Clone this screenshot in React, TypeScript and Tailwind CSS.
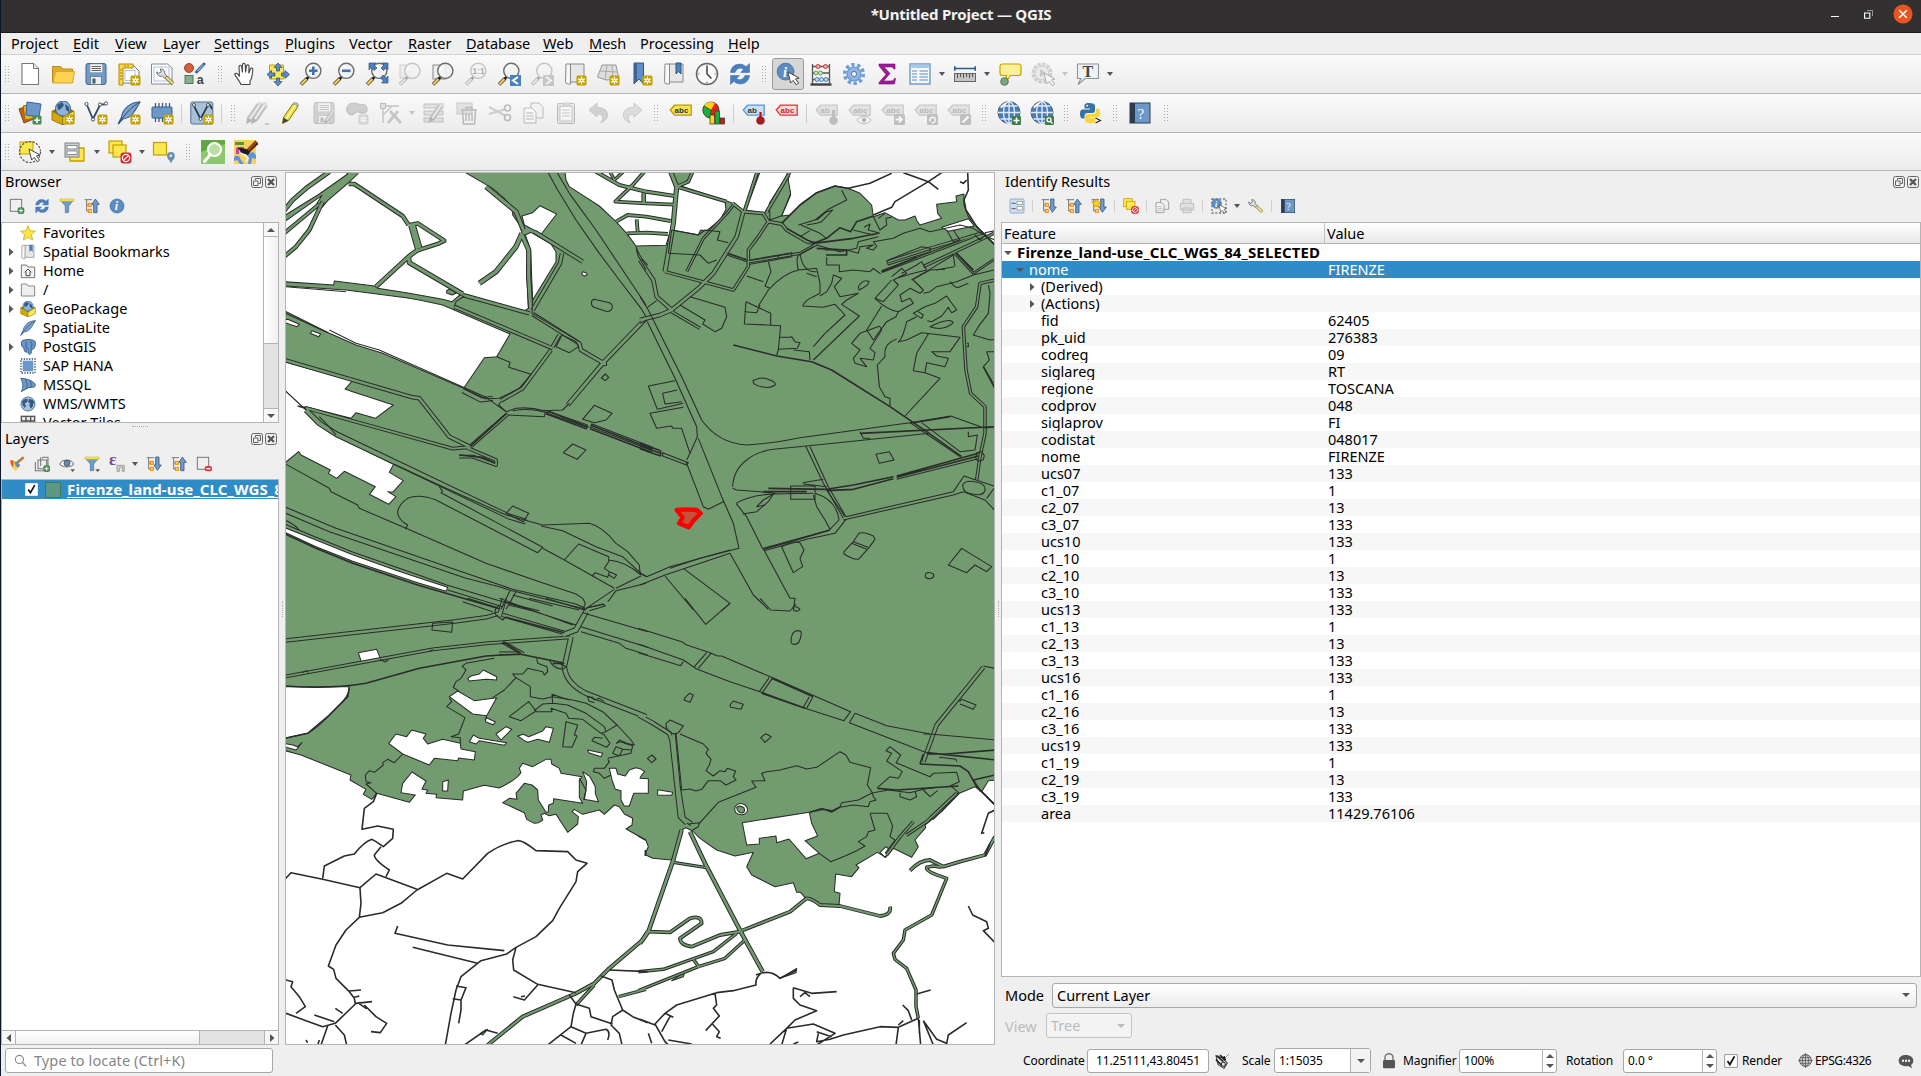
import React from "react";

type Kids = { children?: React.ReactNode };

/* ---------- icon helpers ---------- */

const Svg = ({ children, s = "h-6 w-6", o = "" }: Kids & { s?: string; o?: string }) => (
  <svg viewBox="0 0 24 24" className={`${s} ${o} shrink-0`} fill="none">
    {children}
  </svg>
);
const Star = () => (
  <g>
    <rect x="13.5" y="13.5" width="10" height="10" rx="1.5" fill="#c4a000" />
    <path d="M18.5 14.8v7.4M15.3 16.6l6.4 3.8M21.7 16.6l-6.4 3.8" stroke="#fff" strokeWidth="1.3" />
    <circle cx="18.5" cy="18.5" r="1.8" fill="#fff" />
    <circle cx="18.5" cy="18.5" r="0.8" fill="#c4a000" />
  </g>
);
const Lens = ({ fill = "#f2f2f2" }: { fill?: string }) => (
  <g>
    <path d="M2 22.5l6-6" stroke="#3a3a3a" strokeWidth="3.6" />
    <path d="M2.3 22.2l5.4-5.4" stroke="#fcd34a" strokeWidth="2" />
    <path d="M7.5 17l2.2-2.2" stroke="#1d1d1d" strokeWidth="2.6" />
    <circle cx="14.3" cy="8.8" r="7.6" fill={fill} fillOpacity="0.9" stroke="#6b6e6b" strokeWidth="1.4" />
    <path d="M9.5 8a5 5 0 0 1 4-4.2" stroke="#fff" strokeWidth="1.6" />
  </g>
);
const Cursor = ({ x = 11, y = 11 }: { x?: number; y?: number }) => (
  <path transform={`translate(${x} ${y})`} d="M0 0l2.6 11 2.5-2.6 3.2 4.4 2.3-1.6-3.1-4.3 3.6-.9z" fill="#fff" stroke="#444" strokeWidth="1" />
);
const Tag = ({ fill, stroke, color, t = "abc" }: { fill: string; stroke: string; color: string; t?: string }) => (
  <g>
    <path d="M1.2 9l4.400-4.800h16.600v10H5.600z" fill={fill} stroke={stroke} strokeWidth="1.3" />
    <text x="5.6" y="12" fontSize="8" fontWeight="700" fill={color} fontFamily="Liberation Sans, sans-serif">{t}</text>
  </g>
);
const Globe = () => (
  <g>
    <circle cx="12" cy="11.500" r="11" fill="#4a7cb8" stroke="#5a6472" />
    <path d="M1 11.500h22M3.500 5h17M3.500 18h17M12 .5v22" stroke="#dfe9f5" strokeWidth="1.400" />
    <ellipse cx="12" cy="11.500" rx="5.500" ry="11" stroke="#dfe9f5" strokeWidth="1.400" />
    <path d="M4 7a10 10 0 0 1 5-5" stroke="#fff" strokeWidth="1.500" />
  </g>
);
const Earth = () => (
  <g>
    <circle cx="12" cy="12" r="10.500" fill="#a9c3df" stroke="#4f6f93" strokeWidth="1.400" />
    <path d="M3 8l5-4 4 1-1 4-4 2 2 4-2 3-3-4zM14 4l5 2 3 4-2 1-1 5-3 3-2-5 1-3-3-2z" fill="#34587f" />
  </g>
);
const Refresh = () => (
  <g fill="#4a80bd" stroke="#3a6a9f" strokeWidth=".5">
    <path d="M2.500 10.500C3 4.500 8 1.500 13 2.200c2.200.3 3.800 1.200 5 2.500L21.500 1.500v9H12.500l3-3C12.500 5 8.500 6.500 7 10.500z" />
    <path d="M21.500 13.500C21 19.500 16 22.500 11 21.800c-2.200-.3-3.800-1.200-5-2.500L2.500 22.500v-9H11.500l-3 3c3 2.500 7 1 8.500-3z" />
  </g>
);
const Info = () => (
  <g>
    <circle cx="12" cy="12" r="10.500" fill="#5b8cc4" stroke="#3e6a9c" />
    <text x="8.600" y="18.300" fontSize="18" fontStyle="italic" fontWeight="700" fill="#fff" fontFamily="Liberation Serif, serif">i</text>
  </g>
);
const Tree = ({ dir }: { dir: "up" | "down" }) => (
  <g>
    <path d="M1 2.500h11M4 2.500v17h4M4 10.500h4" stroke="#777" strokeWidth="1.500" />
    <rect x="6.500" y="8" width="4.500" height="4.500" fill="#fbd08a" stroke="#f08300" strokeWidth="1.400" />
    <rect x="6.500" y="17" width="4.500" height="4.500" fill="#fbd08a" stroke="#f08300" strokeWidth="1.400" />
    <path d={dir === "down" ? "M14.500 1.500h5v12h3.500l-6 8-5-8h2.500z" : "M14.500 22h5V9.500h3.500l-6-8-5 8h2.500z"} fill="#6f9bce" stroke="#33557c" strokeWidth="1.200" />
  </g>
);
const Yellow2 = () => (
  <g fill="#fbe74f" stroke="#c4a000" strokeWidth="1.200">
    <rect x="1" y="1" width="13" height="12" />
    <rect x="5" y="5" width="13" height="12" />
  </g>
);
const NoEntry = () => (
  <g>
    <rect x="12.500" y="12.500" width="11" height="11" rx="3" fill="#d9262e" />
    <circle cx="18" cy="18" r="3.600" stroke="#fff" strokeWidth="1.300" />
    <path d="M15.600 20.400l4.800-4.800" stroke="#fff" strokeWidth="1.300" />
  </g>
);
const Wrench = () => (
  <g>
    <path d="M12 12l9.500 9" stroke="#7d6b1e" strokeWidth="4.600" />
    <path d="M12 12l9.500 9" stroke="#e8dc8a" strokeWidth="2.800" />
    <path d="M5.500 2.500l1 3.500-3 2-2.500-2c0 4 3 6.500 7 5.500l3 2.500 2.500-2.500-2.500-3c.5-3.500-2-6.500-5.500-6z" fill="#ddd" stroke="#666" strokeWidth="1.200" />
  </g>
);
const Feather = () => (
  <g>
    <path d="M23 1C14 1 6 7 4.500 16L1 23l5-5c8-1 11-6 17-17z" fill="#7ba3d0" stroke="#3b5c82" strokeWidth="1.100" />
    <path d="M23 1C16 5 9 11 1.500 23" stroke="#2f4a6b" strokeWidth="1" />
  </g>
);
const Book = () => (
  <g>
    <rect x="2" y="2" width="20" height="20" fill="#6b97c9" stroke="#2c3e50" />
    <rect x="2" y="2" width="5" height="20" fill="#2c3b4d" />
    <text x="9.500" y="17.500" fontSize="15" fill="#fff" fontFamily="Liberation Serif, serif">?</text>
  </g>
);
const Cube = () => (
  <g>
    <path d="M1 10l11 6v8L1 19z" fill="#d3a800" stroke="#8a6d00" strokeWidth=".8" />
    <path d="M23 10l-11 6v8l11-5z" fill="#fbe74f" stroke="#8a6d00" strokeWidth=".8" />
    <path d="M1 10l5-3h12l5 3-11 6z" fill="#8f7300" />
    <circle cx="12" cy="7.500" r="7.500" fill="#8fb2d9" stroke="#3b6392" />
    <path d="M6 4l5-3 2 3-3 4-3 1zM14 3l4 3 0 5-3-2z" fill="#34587f" />
  </g>
);
const Disk = () => (
  <g>
    <rect x="2" y="1.500" width="20" height="21" rx="2" fill="#6c9bd0" stroke="#44658c" />
    <path d="M6 2h12.500v8.500H6z" fill="#f5f5f5" stroke="#999" strokeWidth=".6" />
    <path d="M7.500 4.500h9.500M7.500 6.500h9.500M7.500 8.500h9.500" stroke="#555" strokeWidth=".9" />
    <path d="M6.500 14.500h11v8h-11z" fill="#eee" stroke="#555" strokeWidth=".6" />
    <path d="M8.500 16.500h3v5h-3z" fill="#3b5c82" />
  </g>
);
const Pencil = ({ fill = "#f0dc3c" }: { fill?: string }) => (
  <g>
    <path d="M3.500 22.500l1-6L14 2.500l5 3-9.500 14z" fill={fill} stroke="#8c7a00" strokeWidth="1" />
    <path d="M3.500 22.500l1-6 5 3z" fill="#444" />
    <path d="M14 2.500c2-2.500 7 0 5 3z" fill="#bbb" stroke="#888" strokeWidth=".6" />
    <path d="M7 18l9.500-14" stroke="#fff8b0" strokeWidth="1.500" />
  </g>
);
const Sheet = () => <path d="M4 1.500h11.500l5 5v16H4z" fill="#fff" stroke="#777" strokeWidth="1.100" />;
const Funnel = () => (
  <g>
    <path d="M2 3h20l-7.500 9v9.500l-5 1V12z" fill="#6e99cb" stroke="#4a6f9c" />
    <path d="M1.500 1.500h21v3.500h-21z" fill="#fbe74f" stroke="#b89a00" strokeWidth=".6" />
  </g>
);
const Roll = () => (
  <g>
    <path d="M7 2h14v18H7z" fill="#e7e7e7" stroke="#888" />
    <path d="M3 2h4.500v20H5a2.500 2.500 0 0 1-2.500-2.500z" fill="#f7f7f7" stroke="#888" />
  </g>
);

/* ---------- toolbar parts ---------- */

const B = ({ children }: Kids) => <div className="flex w-[33px] shrink-0 items-center justify-center">{children}</div>;
const Handle = ({ w = "w-4" }: { w?: string }) => (
  <div className={`${w} flex shrink-0 items-center justify-center`}>
    <div className="h-[18px] w-[6px] bg-[radial-gradient(circle,#aaaaaa_0.8px,transparent_0.9px)] bg-[size:3px_3px]" />
  </div>
);
const Sep = () => (
  <div className="flex w-[7px] shrink-0 items-center justify-center">
    <div className="h-[19px] w-px bg-[#cfcfcf]" />
  </div>
);
const Tri = ({ w = "w-3", c = "border-t-[#555]" }: { w?: string; c?: string }) => (
  <div className={`${w} flex shrink-0 items-center justify-center`}>
    <div className={`h-0 w-0 border-x-[3.5px] border-t-[4px] border-x-transparent ${c}`} />
  </div>
);
const Bar = ({ children, h }: Kids & { h: string }) => (
  <div className={`${h} flex shrink-0 border-b border-[#b4b4b4] bg-gradient-to-b from-[#fafafa] to-[#ececec]`}>{children}</div>
);
const GRAY = "grayscale opacity-35";

const ToolbarOne = () => (
  <Bar h="h-[39px]">
    <Handle w="w-[12px]" />
    <B><Svg><Sheet /><path d="M15.500 1.500v5h5" stroke="#777" fill="#eee" /></Svg></B>
    <B><Svg><path d="M1.500 4.500h8l2 2.500h10v13.500h-20z" fill="#e0ac2c" stroke="#b98a1c" /><path d="M4.500 9.500h19l-2 11.500h-19.500z" fill="#fcd354" stroke="#d8a72c" /></Svg></B>
    <B><Svg><Disk /></Svg></B>
    <B><Svg><path d="M3 3h13l6 6v12H3z" fill="#fff" stroke="#777" /><path d="M2 2h14v4H6v17H2z" fill="#fbd94a" stroke="#b28a00" /><path d="M3 8h2M3 11h2M3 14h2M3 17h2M8 3v2M11 3v2" stroke="#8a6d00" strokeWidth=".8" /><rect x="8" y="8.500" width="10" height="10" stroke="#a9bfe6" /><Star /></Svg></B>
    <B><Svg><path d="M1.500 2h16l4.500 4v16H1.500z" fill="#fff" stroke="#888" /><rect x="4" y="5" width="15" height="14" stroke="#a9bfe6" /><g transform="translate(6 5) scale(.8)"><Wrench /></g></Svg></B>
    <B><Svg><circle cx="6" cy="6" r="4.500" fill="#d2603a" stroke="#a54524" /><path d="M13.500 10l7.500-8" stroke="#44658c" strokeWidth="3" strokeLinecap="round" /><path d="M14.500 9l6-6.500" stroke="#7fa8d8" strokeWidth="1.200" /><rect x="2" y="13.500" width="8" height="8" fill="#88b08e" stroke="#4d7a55" /><text x="13.800" y="22" fontSize="12.500" fontWeight="700" fill="#444" fontFamily="Liberation Sans, sans-serif">a</text></Svg></B>
    <Handle w="w-[17px]" />
    <B><Svg><path d="M8 22.500c-1-3-5.500-8-6.300-10.500 1-1.700 3.300-.3 4.800 2.500L6 4.500c.3-1.700 2.200-1.700 2.600 0l.8 6V2.800c.3-1.900 2.500-1.900 2.800 0l.4 7.700.8-6.500c.4-1.700 2.600-1.500 2.600.3l-.2 7 1.600-4.300c.7-1.600 2.600-1 2.400.8-.5 5-.5 8.500-2.800 11.200v3.500z" fill="#fff" stroke="#444" strokeWidth="1.100" /></Svg></B>
    <B><Svg><path d="M3.500 3h14v14h-14z" fill="#fbe74f" stroke="#c4a000" /><g fill="#5b8cc4" stroke="#33557c" strokeWidth=".8"><path d="M12 1l4 4.500h-2.500V9h-3V5.500H8zM12 24l4-4.500h-2.500V16h-3v3.500H8zM1 12.500l4.500-4V11H9v3H5.500v2.500zM23.500 12.500l-4.500-4V11h-3.500v3H19v2.500z" /></g></Svg></B>
    <B><Svg><Lens /><path d="M14.300 4.500v8.600M10 8.800h8.600" stroke="#3f74b3" strokeWidth="2.600" /></Svg></B>
    <B><Svg><Lens /><path d="M10 8.800h8.600" stroke="#3f74b3" strokeWidth="2.600" /></Svg></B>
    <B><Svg><Lens /><g fill="#4a80bd" stroke="#33557c" strokeWidth=".7"><path d="M4 1h7L9 3l3 3-3 2.500-3-3L4 8zM23 1h-6l2 2-3 3 2.500 2.500 3-3 1.500 2zM23 21v-7l-2 2-3-3-2.500 3 3 3-2 2z" /></g></Svg></B>
    <B><Svg o={GRAY}><rect x="2" y="3" width="13" height="13" fill="#fbe74f" stroke="#888" /><Lens /></Svg></B>
    <B><Svg><rect x="2" y="3" width="13" height="14" fill="#eee" stroke="#888" /><Lens /></Svg></B>
    <B><Svg o={GRAY}><Lens /><text x="8.500" y="12" fontSize="8.500" fontWeight="700" fill="#222" fontFamily="Liberation Sans, sans-serif">1:1</text></Svg></B>
    <B><Svg><Lens /><rect x="13" y="13" width="11" height="11" fill="#4a80bd" /><path d="M21 15l-5 3.500 5 3.500" stroke="#fff" strokeWidth="2" /></Svg></B>
    <B><Svg o={GRAY}><Lens /><rect x="13" y="13" width="11" height="11" fill="#4a80bd" /><path d="M16 15l5 3.500-5 3.500" stroke="#fff" strokeWidth="2" /></Svg></B>
    <B><Svg><Roll /><Star /></Svg></B>
    <B><Svg><path d="M6 3h14l3 14-13 1-8.500-3z" fill="#ddd" stroke="#999" /><path d="M4 9l17 1M11 3l-2 15M16 3l1 14" stroke="#aaa" /><Star /></Svg></B>
    <B><Svg><path d="M5 1h9.500v21L10 17l-5 5z" fill="#5f8fc6" stroke="#33557c" /><path d="M5 1h3v18l-3 3z" fill="#3c6595" /><Star /></Svg></B>
    <B><Svg><Roll /><path d="M14 1h5v11l-2.500-2.500L14 12z" fill="#4a80bd" stroke="#33557c" /></Svg></B>
    <B><Svg><circle cx="12" cy="12" r="10.500" fill="#fafafa" stroke="#666" strokeWidth="1.500" /><path d="M12 4v8l4.500 4.500" stroke="#333" strokeWidth="1.400" /><path d="M12 2.500v2M12 19.500v2M2.500 12h2M19.500 12h2" stroke="#5b8cc4" strokeWidth="1.200" /></Svg></B>
    <B><Svg><Refresh /></Svg></B>
    <Handle w="w-[15px]" />
    <B><div className="-my-1 flex h-8 w-8 items-center justify-center rounded-[3px] border border-[#9b9b9b] bg-[#d6d6d6]"><Svg><g transform="scale(.8)"><Info /></g><Cursor x={12} y={10} /></Svg></div></B>
    <B><Svg><path d="M3.500 2v20M20.500 2v20M3.500 4.500h17M3.500 11h17M3.500 17.500h17" stroke="#555" strokeWidth="1.300" /><path d="M1.500 22.500h21" stroke="#444" strokeWidth="2.400" /><g stroke="#c33" fill="#f3b0b0"><circle cx="9" cy="4.500" r="2" /><circle cx="16.500" cy="4.500" r="2" /></g><g stroke="#5a9c55" fill="#c9e8c5"><circle cx="7" cy="11" r="2" /><circle cx="11.500" cy="11" r="2" /></g><g stroke="#4a7fb5" fill="#c3dbf3"><circle cx="8" cy="17.500" r="2" /><circle cx="12.500" cy="17.500" r="2" /><circle cx="17" cy="17.500" r="2" /></g></Svg></B>
    <B><Svg><circle cx="12" cy="12" r="9.300" stroke="#6f9ed6" strokeWidth="3.600" strokeDasharray="3.300 2.540" /><circle cx="12" cy="12" r="7" fill="#8db4e2" stroke="#6094d0" strokeWidth="1.200" /><circle cx="12" cy="12" r="2.600" fill="#f3f3f3" stroke="#4a7cb8" /></Svg></B>
    <B><Svg><path d="M4 2h16v5h-1.200c-.5-1.500-1.300-2-3-2H9l6 6.500L8.500 19H16c2 0 2.800-.8 3.300-2.500h1.200L19.500 22H4v-1.500l7-8L4 4z" fill="#a2179c" stroke="#6c0f68" strokeWidth=".6" /></Svg></B>
    <B><Svg><rect x="2" y="2" width="20" height="20" fill="#f4f8fc" stroke="#6c96c4" strokeWidth="1.400" /><path d="M2.500 2.500h19v3.500h-19z" fill="#a8c8ea" /><path d="M4 9h5M4 12h5M4 15h5M4 18h5M11.500 9h8.500M11.500 12h8.500M11.500 15h8.500M11.500 18h8.500" stroke="#5b8cc4" strokeWidth="1.200" /></Svg></B>
    <Tri />
    <B><Svg><path d="M1.500 6.500h21M1.800 4.200v4.600M22.200 4.200v4.600" stroke="#2f5a8c" strokeWidth="1.600" /><rect x="1.500" y="11.500" width="21" height="8" fill="#c4c4c4" stroke="#666" /><path d="M4.500 12v4M7.500 12v3M10.500 12v4M13.500 12v3M16.500 12v4M19.500 12v3" stroke="#555" /></Svg></B>
    <Tri />
    <B><Svg><path d="M6 2h15a2.500 2.500 0 0 1 2 2.500V11a2.500 2.500 0 0 1-2.500 2.500h-8L8 20l.5-6.500H4.500A2.500 2.500 0 0 1 2 11V4.500A2.500 2.500 0 0 1 4.500 2z" fill="#fdf094" stroke="#c4a000" strokeWidth="1.200" /><circle cx="6.500" cy="19.500" r="3.800" fill="#78a87c" stroke="#4d7a55" /></Svg></B>
    <B><Svg o="grayscale opacity-40"><circle cx="11" cy="11" r="9" stroke="#999" strokeWidth="3" strokeDasharray="3.500 1.200" /><circle cx="11" cy="11" r="7" fill="#ddd" stroke="#888" /><path d="M9 7l6 4-6 4z" fill="#888" /><Cursor x={13} y={11} /></Svg></B>
    <Tri c="border-t-[#c4c4c4]" />
    <B><Svg><path d="M1.500 2h21v14.500H9l-7 6 3-6H1.500z" fill="#edf3f6" stroke="#8a9499" strokeWidth="1.100" /><text x="6.500" y="14.500" fontSize="16" fontWeight="700" fill="#444" fontFamily="Liberation Serif, serif">T</text></Svg></B>
    <Tri />
  </Bar>
);

const MiniBadge = ({ children }: Kids) => (
  <g><rect x="13" y="13" width="11" height="11" rx="1.500" fill="#666" />{children}</g>
);

const ToolbarTwo = () => (
  <Bar h="h-[39px]">
    <Handle w="w-[12px]" />
    <B><Svg><path d="M1 8l12-4 5 13-12 5z" fill="#c4602c" stroke="#8a3d14" /><path d="M5 5l11-2 3 14-12 2z" fill="#e3b51d" stroke="#8a6d00" /><path d="M9 1l14 2-2 13-13-2z" fill="#6c97c9" stroke="#3b6392" /><rect x="14.500" y="14.500" width="9" height="9" rx="1.500" fill="#4b8a55" /><path d="M19 16.500v5.500M16.200 19.200h5.600" stroke="#fff" strokeWidth="1.600" /></Svg></B>
    <B><Svg><Cube /><Star /></Svg></B>
    <B><Svg><path d="M2.500 3L9 18 16 4c2-2 4 1 6-1.500" stroke="#2f4a6b" strokeWidth="1.800" /><g fill="#fff" stroke="#555"><circle cx="2.500" cy="3" r="1.600" /><circle cx="9" cy="18.500" r="1.600" /><circle cx="16" cy="3.500" r="1.600" /><circle cx="22" cy="2.500" r="1.600" /></g><Star /></Svg></B>
    <B><Svg><Feather /><Star /></Svg></B>
    <B><Svg><rect x="2" y="6" width="20" height="11" rx="1" fill="#6c97c9" stroke="#3b5c82" /><path d="M5.500 2v4M9 2v4M12.500 2v4M16 2v4M19.500 2v4M5.500 17v4M9 17v4M12.500 17v4" stroke="#3b5c82" strokeWidth="1.300" /><Star /></Svg></B>
    <Sep />
    <B><Svg><rect x=".8" y="1" width="22" height="22" rx="1.500" fill="#a9c0da" stroke="#4f6f93" /><path d="M3 3l7.500 15L18 4c1.500-2 3 2 4 4" stroke="#22394f" strokeWidth="1.700" /><g fill="#fff" stroke="#555"><circle cx="4" cy="4" r="1.500" /><circle cx="10.500" cy="18" r="1.500" /><circle cx="18" cy="4" r="1.500" /></g><Star /></Svg></B>
    <Sep />
    <Handle />
    <B><Svg o={GRAY}><g transform="translate(-3 0)"><Pencil fill="#c55" /></g><g transform="translate(2 0)"><Pencil fill="#c55" /></g><path d="M18 22.500h6l-3 2z" fill="#555" /></Svg></B>
    <B><Svg><Pencil /></Svg></B>
    <B><Svg o={GRAY}><Disk /><g transform="translate(10 8) scale(.65)"><Pencil fill="#c55" /></g></Svg></B>
    <B><Svg o={GRAY}><path d="M2 6c2-5 8-4 11-3s8-1 9 4-3 6-6 5-4-2-7 1-9-1-7-7z" fill="#888" stroke="#555" /><Star /></Svg></B>
    <B><Svg o={GRAY}><path d="M5 22V5h16M5 14L14 5" stroke="#666" strokeWidth="1.300" /><rect x="2.500" y="2.500" width="5" height="5" fill="#bbb" stroke="#555" /><path d="M10 22L20 10M12 10l11 12" stroke="#777" strokeWidth="2.800" /></Svg></B>
    <Tri w="w-[11px]" c="border-t-[#c4c4c4]" />
    <B><Svg o={GRAY}><g fill="#cdbf80" stroke="#666"><rect x="2" y="3" width="19" height="4" /><rect x="2" y="10" width="19" height="4" /><rect x="2" y="17" width="19" height="4" /></g><g transform="translate(4 1) scale(.9)"><Pencil fill="#c55" /></g></Svg></B>
    <B><Svg o={GRAY}><rect x="2" y="2" width="15" height="11" fill="#bbb" stroke="#777" /><path d="M6 9h16M11 9V6.500h6V9M7.500 9l1 14h11l1-14M11 12v8M14 12v8M17 12v8" stroke="#b33" strokeWidth="1.500" /></Svg></B>
    <B><Svg o={GRAY}><path d="M1 6l17 9M1 13l17-5" stroke="#888" strokeWidth="2" /><circle cx="19.500" cy="7" r="3" stroke="#555" strokeWidth="1.600" /><circle cx="19.500" cy="16.500" r="3" stroke="#555" strokeWidth="1.600" /></Svg></B>
    <B><Svg o={GRAY}><path d="M10 2h8l4 4v11H10z" fill="#eee" stroke="#555" /><path d="M3 7h8l4 4v11H3z" fill="#fff" stroke="#555" /><path d="M5 12h7M5 15h8M5 18h8" stroke="#555" /></Svg></B>
    <B><Svg o={GRAY}><rect x="3.500" y="2.500" width="17" height="20" rx="1" fill="#ccc" stroke="#555" /><rect x="6" y="5.500" width="12" height="14.500" fill="#fff" stroke="#777" /><path d="M8 1.500h8v4H8z" fill="#999" /><path d="M8 9h8M8 12h8M8 15h8" stroke="#777" /></Svg></B>
    <B><Svg o={GRAY}><path d="M2 9l8-7v4.500c8 0 12 4 10 10-1 2.500-3 4-6 5 3-4 3-8.500-4-8.500V16z" fill="#b98a8a" stroke="#777" /></Svg></B>
    <B><Svg o={GRAY}><path d="M22 9l-8-7v4.500c-8 0-12 4-10 10 1 2.500 3 4 6 5-3-4-3-8.500 4-8.500V16z" fill="#a9b7a9" stroke="#777" /></Svg></B>
    <Handle />
    <B><Svg><Tag fill="#fbe44c" stroke="#b89a00" color="#333" /></Svg></B>
    <B><Svg><circle cx="9" cy="9" r="8" fill="#e3231b" stroke="#222" strokeWidth=".7" /><path d="M9 9V1a8 8 0 0 0-7 4zM9 9l4-7-4-1-6 2z" fill="#fbd31a" /><path d="M9 9L2 5a8 8 0 0 0 6 12z" fill="#17b03c" stroke="#222" strokeWidth=".5" /><rect x="8" y="14" width="4.500" height="9" fill="#fbd31a" stroke="#333" strokeWidth=".7" /><rect x="13" y="10" width="4.500" height="13" fill="#17b03c" stroke="#333" strokeWidth=".7" /><rect x="18" y="17" width="4.500" height="6" fill="#d3190f" stroke="#333" strokeWidth=".7" /></Svg></B>
    <Sep />
    <B><Svg><Tag fill="#c9e0f7" stroke="#5b94d6" color="#333" t="ab" /><path d="M18.500 7v10" stroke="#ddd" strokeWidth="3.500" /><path d="M18.500 11v7" stroke="#a11" strokeWidth="2.200" /><circle cx="18.500" cy="19.500" r="4.300" fill="#a51d24" /></Svg></B>
    <B><Svg><Tag fill="#fbd9da" stroke="#ee2d33" color="#e3151c" /></Svg></B>
    <Sep />
    <B><Svg o={GRAY}><Tag fill="#cbc58a" stroke="#777" color="#444" t="ab" /><path d="M18.500 9v9" stroke="#855" strokeWidth="3" /><circle cx="18.500" cy="19.500" r="4.300" fill="#855" /></Svg></B>
    <B><Svg o={GRAY}><Tag fill="#cbc58a" stroke="#777" color="#444" /><path d="M9 19c4-5 10-5 14 0-4 5-10 5-14 0z" fill="#fff" stroke="#444" /><circle cx="16" cy="19" r="2.300" fill="#444" /></Svg></B>
    <B><Svg o={GRAY}><Tag fill="#cbc58a" stroke="#777" color="#444" /><MiniBadge><path d="M14.500 18.500h6M18 15.500l3 3-3 3" stroke="#fff" strokeWidth="1.800" /></MiniBadge></Svg></B>
    <B><Svg o={GRAY}><Tag fill="#cbc58a" stroke="#777" color="#444" /><MiniBadge><path d="M16 20.500c-1-4 4-6 5-2.500s-2 4-3.500 4" stroke="#fff" strokeWidth="1.600" /></MiniBadge></Svg></B>
    <B><Svg o={GRAY}><Tag fill="#cbc58a" stroke="#777" color="#444" /><MiniBadge><path d="M15.500 21.500l6-6" stroke="#fff" strokeWidth="2.400" /></MiniBadge></Svg></B>
    <Handle w="w-[17px]" />
    <B><Svg><Globe /><rect x="15" y="15" width="9" height="9" rx="1" fill="#3f7d49" /><path d="M19.500 16.500v6M16.500 19.500h6" stroke="#fff" strokeWidth="1.600" /></Svg></B>
    <B><Svg><Globe /><rect x="15" y="15" width="9" height="9" rx="1" fill="#3f7d49" /><circle cx="19" cy="18.800" r="2" stroke="#fff" strokeWidth="1.300" /><path d="M20.500 20.500l2 2" stroke="#fff" strokeWidth="1.300" /></Svg></B>
    <Handle />
    <B><Svg><path d="M10 2c-4 0-4.500 1.500-4.500 3v2.500H11v1H3.500C1.500 8.500 1 10.500 1 13s1 4.500 2.500 4.500h2V15c0-2 1.500-3 3-3h5c1.500 0 2.500-1 2.500-2.500V5c0-2-2-3-6-3z" fill="#3871a3" /><path d="M12 22.500c4 0 4.500-1.500 4.500-3V17H11v-1h7.500c2 0 2.500-2 2.500-4.500S20 7.500 18.500 7.500H17v2.500c0 2-1.500 3-3 3H9c-1.500 0-3 1-3 2.500V19.500c0 2 2 3 6 3z" fill="#fcd342" /><circle cx="8.200" cy="4.700" r=".9" fill="#fff" /><path d="M16.500 17l5 2.500-5 2.500" stroke="#222" strokeWidth="1.100" /></Svg></B>
    <Handle />
    <B><Svg><Book /></Svg></B>
    <Handle w="w-5" />
  </Bar>
);

const ToolbarThree = () => (
  <Bar h="h-[38px]">
    <Handle w="w-[12px]" />
    <B><Svg><rect x="2" y="2" width="13" height="12" fill="#fbe74f" stroke="#c4a000" /><circle cx="12" cy="12" r="10.500" stroke="#555" strokeWidth="1.200" strokeDasharray="2.200 1.500" /><Cursor x={11} y={9} /></Svg></B>
    <Tri />
    <B><Svg><path d="M7 8h14v13H7z" fill="#fbe74f" stroke="#c4a000" strokeWidth="1.300" /><rect x="2" y="3" width="14" height="14" fill="#cdd1d6" stroke="#7d8288" /><rect x="4" y="5.500" width="10" height="3.500" fill="#fff" stroke="#777" strokeWidth=".8" /><rect x="4" y="11" width="10" height="3.500" fill="#fff" stroke="#777" strokeWidth=".8" /></Svg></B>
    <Tri w="w-3" />
    <B><Svg><Yellow2 /><NoEntry /></Svg></B>
    <Tri w="w-[11px]" />
    <B><Svg><rect x="1.500" y="2.500" width="13" height="12.500" fill="#fbe74f" stroke="#c4a000" strokeWidth="1.200" /><path d="M19 23.500c-.8-3-4-4.500-4-7.500a3.900 3.900 0 0 1 7.800 0c0 3-3 4.500-3.800 7.500z" fill="#6a8fab" /><circle cx="18.900" cy="15.800" r="1.400" fill="#dfe8ee" /></Svg></B>
    <Handle />
    <B><Svg><path d="M0 0h24v24H0z" fill="#5fa843" /><path d="M0 12L24 4v20H0z" fill="#8cc96c" /><circle cx="13.500" cy="9.500" r="6.500" stroke="#fff" strokeWidth="2.200" fill="#b9e0a2" /><path d="M9 15l-5.500 6.500" stroke="#fff" strokeWidth="3" strokeLinecap="round" /></Svg></B>
    <B><Svg><path d="M0 0h22v24H0z" fill="#f8d25c" /><path d="M1 2h9v3H1z" fill="#3f9c46" /><path d="M2 8h3v6H2zM6 7h4v6H6z" fill="#c04a90" /><path d="M0 17c4-3 6 0 7 3l3 4H6l-3-4-3 1zM13 14l6-2 3 3v4l-4-1-1 6h-3l1-6-3-2z" fill="#5b94e0" /><path d="M6 13l5 2 3 3-2 4" stroke="#fff" strokeWidth="1.500" /><path d="M13 12L23 2" stroke="#5e2408" strokeWidth="4.500" /><path d="M3 7l5 6 6 2 2-3-4-3z" fill="#1d1d1d" /><path d="M14 10L22 2" stroke="#a34a20" strokeWidth="1.800" /></Svg></B>
  </Bar>
);

/* ---------- map ---------- */

const GREEN = "#729b6f";
const INK = "#2a2c2a";

type Sector = { at: string; white?: string[]; shore?: string[]; green?: string[]; wide?: [number, string][]; thin?: string[]; ink?: string[] };

const NW: Sector = {
  at: "translate(0 0)",
  white: [
    "M-10 0H525L620 55 655 85 680 120 680 135 703 168 708 190 727 240 722 300 727 415 715 423 545 375 525 372 498 395 470 388 370 370 275 355 265 348 145 333 143 345-10 335z",
    "M-10 347L180 360 360 383 400 390 470 405 672 492 632 560 595 563 533 655 290 550 210 525 130 490-10 420z",
    "M718 195L735 187 795 222 810 245 810 275 740 390 737 320 734 240z",
    "M708 138L740 128 762 107 812 132 766 192 715 165z",
    "M836 0L840 30 850 50 940 108 990 155 1022 190 1050 228 1140 226 1154 180 1165 110 1170 50 1155 0z",
    "M-10 574L200 632 177 657 200 665 322 705 268 745 210 728 195 745 60 710 50 712-10 655z",
    "M-10 880L0 876 38 845 45 855 133 900 127 910 152 925 175 904 268 950 250 973 308 1003 330 980 305 965 320 967 352 932 310 907 323 883 150 798 100 760 60 720-10 655z",
    "M-6 450L5 448 40 463 33 470-6 457z", "M78 482L104 492 98 500 73 490z",
    "M-6 1072L90 1110 200 1154 330 1201 400 1224 485 1252 480 1264 395 1238 200 1174 90 1130-6 1086z",
    "M890 305l10 3 4 6-9 4-8-5z",
  ],
  green: [
    "M175 0H220L215 12 188 38 125 92 108 112 90 105 108 76 0 152-10 140 100 72 185 12z",
    "M482 362q12-10 28 8l-12 5-16-6z",
  ],
  wide: [
    [13, "M-6 122L20 90 60 55 130 5"], [12, "M110 95L70 180 30 230-8 262"], [11, "M100 102L-8 192"],
    [12, "M188 42H205L350 138 368 165"], [22, "M378 165L398 235"],
    [13, "M395 240L370 258 270 350"], [12, "M460 220L392 242M372 165L395 160 475 212 455 222"], [14, "M368 260L370 278 530 372"], [15, "M708 190L690 230 630 305 580 340"],
    [14, "M708 195L728 240 728 320 734 415"], [12, "M745 185L890 275"], [12, "M828 250L822 280 740 420"],
    [14, "M600 50L690 125 712 180"],
    [11, "M930 5L1000 45 1080 65 1166 78"], [10, "M1166 104L1080 100 988 95 1040 45 1075 5M1072 70V100"], [10, "M990 155L1025 135 1080 140 1154 153M1052 148L1055 185M1022 190L1080 188 1146 192"], [9, "M972 5L985 30 1012 5"],
    [12, "M530 375L730 430M740 432L880 520 885 540 950 578"], [11, "M505 410L800 535M820 495L800 530M795 540L710 655 645 692"],
    [13, "M1080 445L950 580 845 705"], [12, "M-5 570L380 682 400 685 490 800 555 832"], [10, "M60 714L500 836 540 832 630 870 630 885 560 860 520 860"],
    [16, "M60 720L100 760 150 792 670 1040 720 1055"], [11, "M665 732L550 832"], [10, "M955 575h-10l5 8h8z"],
    [14, "M620 685L585 690 530 662"],
  ],
  ink: [
    "M100 740Q135 775 150 795", "M-5 428L125 488M130 480L210 520 280 540 600 682 660 725",
    "M-5 350L180 365M505 410L510 395 535 378M810 530L828 495 870 515 878 530 850 548z",
    "M533 655L598 686 640 685 700 655 735 613 668 592 672 577 632 560",
    "M785 5L815 60 870 150 940 250 1000 330 1065 415 1080 440M812 5L850 70 930 180 1000 285 1080 405",
    "M740 390L738 430 880 515", "M1050 230L1055 255 1080 300M1050 230Q1060 262 1085 285",
    "M925 388l45 10q12 5 8 18-4 10-18 8l-30-10q-14-4-14-16 0-8 9-10z", "M958 612l10 10-10 10-12-8z",
    "M925 706L978 730 960 750 925 758 890 748z", "M860 822L900 840 873 868 832 848z",
    "M645 695L638 705 660 725 690 715Q730 710 775 722L830 720 850 700M665 735L775 740 778 725M680 722Q730 712 790 730",
    "M775 720L905 765M780 728L903 772M918 762L1100 832M915 772L1095 840M905 765l-4 10M918 760l-6 15",
    "M-5 880L130 955 135 965 215 1005 220 1015 360 1075 600 1180 760 1235 870 1272 890 1285 898 1300 890 1320",
    "M460 950L470 965 465 968 770 1132 755 1148 450 990Q400 970 365 985 335 1005 335 1030 340 1052 365 1065L358 1078",
    "M325 883L465 948 660 1035 770 1065 910 1060Q950 1070 990 1120L1025 1145 1060 1185 1062 1210 1080 1218",
    "M660 1030L680 1008 728 1030 712 1055z", "M765 1068L830 1082 930 1130 1010 1160 1070 1215M770 1135L835 1170 985 1255",
    "M835 1170L878 1122 968 1160 968 1175 955 1195 970 1205 965 1222 928 1208 918 1218M968 1170Q1020 1175 1065 1215M970 1205l22 10-8 10-15-10",
    "M1080 1240L1060 1245 990 1262 970 1290 965 1295M985 1258L905 1312 895 1322M1065 1218L990 1255M910 1312L955 1303",
    "M-5 1010L150 1075 540 1210 680 1258 870 1302 898 1315M-5 1028L130 1085 540 1225 640 1250 670 1260 900 1318",
    "M-5 1050Q25 1062 40 1080M-5 1062L90 1102 200 1146 400 1216 480 1244 665 1300M485 1260L650 1310",
    "M672 1262L645 1318M690 1265L660 1318M665 1300L760 1322M665 1305L740 1322M680 1275L800 1308",
  ],
  thin: ["M35 708L60 715", "M785 723L908 772M915 766L1100 838", "M780 731L903 777M912 776L1100 848", "M-5 1091L90 1135 200 1180 395 1245 640 1316", "M662 730L552 830", "M520 855L590 862 628 880"],
};

const NE: Sector = {
  at: "translate(1062 0)",
  white: [
    "M116 52L255 95 258 118 240 150 200 182 182 180 175 194 95 180 104 110z",
    "M155 0H354L312 124 278 100 262 94 120 47 150 25z",
    "M362 0H445L430 45 390 110 372 130 318 120z",
    "M455 0H1070V230L1020 180 985 140 972 105 972 72 948 78 950 95 890 103 893 130 905 145 840 165 832 155 825 138 795 150 775 150 735 128 700 140 695 105 660 70 625 55 585 48 530 68 480 105 450 135 425 138 452 75 440 40z",
    "M905 172L985 146 1003 168 925 184z", "M1040 200L1065 210V182L1035 188z",
  ],
  green: ["M442 15L452 70 425 137 390 150 388 100z"],
  wide: [
    [14, "M92 5L110 50 100 160 75 305"], [10, "M110 50L145 35 158 5M12 70V102"], [10, "M110 50L260 95"],
    [10, "M352 5L314 122"], [10, "M445 15L380 125"], [10, "M278 100L310 125 370 130 385 155 425 162 440 180 500 215 530 222"],
    [12, "M310 125L290 200 220 310 175 355 95 420 60 435 0 450"], [9, "M75 305L280 360 325 290 325 240 355 200 385 155"],
    [8, "M262 252L330 275 420 260 480 250 530 222"], [8, "M280 105L265 125 190 205 140 305"],
    [12, "M95 420L50 380 40 330 0 270"], [9, "M95 425L180 475"],
    [9, "M850 290L1062 190M745 275L870 235 1030 188"],
    [7, "M725 305L830 265 1000 200M940 245L1000 310 1062 268"],
    [9, "M1065 330L1020 340 1010 410 970 470 978 600 992 670 1035 710 1035 790 1020 860 1010 930"],
  ],
  thin: [
    "M625 55L690 40 755 10", "M790 8L865 35 905 8M865 35L895 58M865 35L765 95 755 112 700 135", "M983 5L985 60 972 90 978 120 1010 170 1065 225", "M960 35l10 5 10-10",
    "M440 175L520 220 640 205 715 190", "M425 160L480 105 530 68 585 48 630 56", "M700 138L650 155 632 185 600 173 560 205 520 220",
    "M280 525L410 558 515 575 575 600 750 710 860 785 965 860", "M385 955L560 958 640 945 760 920M500 965H370M560 962L640 958 760 926M1015 850L770 918M1015 858L770 922",
    "M0 820L62 842M0 828L62 850M0 836L62 858M62 842V858", "M1030 590L1065 655",
    "M810 760L930 740M660 790L1065 770M370 1138L460 1112 570 1080", "M530 235L620 240 620 255H558", "M950 250L1000 300M725 305L830 262",
  ],
  ink: [
    "M85 250L180 255 205 280 230 270M95 180L175 195 195 180 240 185 232 210 265 218M85 250L95 180M260 250L325 272M330 283L455 260 455 248 330 270M415 255V265",
    "M320 318L370 335M385 275L393 305 375 348 390 355M355 408L385 360Q430 310 475 300L530 295M530 295L540 340 540 370 520 380Q495 390 488 408L550 412 585 403 615 435 555 490 520 530",
    "M120 405L195 450 188 462 225 485 245 475 260 440 255 412 150 380M22 412L50 392",
    "M318 395L392 430V465M318 395L313 462 422 467 415 540 410 555M313 425L350 428 360 405M420 502H450L455 500 465 515 480 518 472 535 415 538M460 540L508 545 510 570",
    "M520 570L658 438 605 403 620 390 655 370 600 380 583 350 605 325 580 315 575 340 560 365 540 378",
    "M475 300Q465 260 480 252L520 230M500 310L530 320M480 252Q490 310 530 305M655 350q15-25 32-15 0 10-30 25zM475 165L525 150 565 118 620 90 605 60M500 165L530 160 545 155 578 120 560 125 530 150M483 165L540 190 560 205M480 200L510 182",
    "M560 262V285H598V305L640 300 690 305 700 295 722 312M555 240H620L655 250 660 230 700 225 680 235 700 240 710 228 700 215 760 205 790 190 840 175 870 185 960 165 1000 175 1030 195",
    "M530 225L600 245 650 235 655 215 715 200M700 140L720 180 740 165 738 145 755 142M640 180L700 195M672 172L690 162 685 180 720 190M715 145L735 130",
    "M740 272L845 230 872 235 870 245 745 285z", "M755 320L785 295 800 310 760 330 775 345 730 395 705 385 755 330M785 310L830 285 845 275 860 300 820 310 770 325M815 330L850 310 940 255 945 290M888 300L942 290",
    "M820 330L850 360 840 370 810 355 780 375 785 395 810 385 820 400 775 425M815 330L870 300 915 298M705 385Q740 420 775 425L768 440 740 455 700 510 680 480 725 408M850 370L870 365 890 350 950 335 1000 315 1062 300",
    "M835 425L850 435 845 445 820 430 855 410 885 400 920 378 950 420 935 428 925 412 905 438 875 455 862 452M870 470Q930 440 940 458 910 485 870 470zM775 518Q790 500 800 455L830 440",
    "M775 515L800 510 845 488 960 502 930 545 875 545 890 558 925 565 915 590 860 578 855 608 820 602 830 550 865 492M855 608L900 625 795 738",
    "M720 470L725 480 690 535 705 548 700 570 660 565 680 590 645 580 640 565 660 540 635 520 660 490 720 468M770 508Q730 520 735 560L712 585 718 650 735 680 750 685 750 708",
    "M930 335Q950 360 960 350L985 340M1045 345L1050 370 1045 430 1015 470 1000 495 1050 510 1065 508M1062 545H1040L1048 570 1030 590 1060 640M920 180L940 215 960 210 940 180M1005 195L1020 210 1030 200M980 520h5v10h-5",
    "M345 630q20-12 45 0 20 8 15 15-15 12-40 5-30-5-25-20z",
    "M0 460L20 450M22 455L105 625 170 770 172 800 150 850 140 870M35 440L125 620 185 750Q235 820 320 825 400 820 480 803L810 758",
    "M105 632L25 648 52 718 130 700M112 660L68 670 75 702 125 695M130 712L30 730 50 775 95 768 98 775 125 775 150 850",
    "M0 380L25 420 35 440", "M175 805L245 980 280 1060 297 1135 180 1165 90 1195M138 875L190 1010 205 1018 250 995",
    "M68 848L145 878 140 885 68 858z", "M278 950Q280 900 320 870 350 845 400 838L500 828 870 790M278 955L290 960 360 965M498 830L550 940 610 1045M510 830L565 950 618 1040",
    "M660 785L670 805 690 805M810 758L860 792 960 860M845 758L960 845 1005 840 1012 795 985 800V785M810 758L932 738 1022 770M1062 770L1035 775",
    "M1015 866L770 928",
    "M708 853L748 845 762 870 718 880z", "M488 938L550 928M490 942L560 950M452 948H525V988H452zM360 965L405 970 370 990 350 1010 375 1005",
    "M288 1000L320 1040 370 1140M288 1000Q330 975 400 972L520 970M400 972L385 995 350 1025 308 1032M525 970Q590 990 597 1050L570 1078M520 975L530 1010 555 1050 570 1078",
    "M618 1040L940 965 972 918 1062 948M610 1050L940 975 970 965 1035 990 1065 1022M372 1142L500 1108 585 1090 618 1048M370 1135L460 1110 570 1080M615 1040L560 960",
    "M968 945q8-15 35-10 35 5 32 25-5 20-38 12-30-5-29-27zM1040 985L1062 955",
    "M640 1115L655 1092Q665 1082 700 1098L705 1108 685 1135 658 1165Q650 1175 612 1152L612 1145zM635 1120L680 1138M640 1115L684 1132",
    "M965 1135L1055 1190 1040 1205 1005 1185 980 1208 925 1185z", "M858 1210q10-6 22 2 5 12-10 14-20 0-12-16z",
    "M425 1130L455 1115 480 1118 492 1140 480 1165 488 1190 460 1208z", "M372 1140L450 1285 465 1285 460 1320M270 1150L340 1275 385 1318M0 1210L20 1220 90 1190 270 1140M0 1245L75 1215 270 1150",
    "M75 1218L160 1320M130 1195L270 1300 245 1322", "M1010 848l15-3 8 12-3 12-15 5-8-10z",
  ],
};

const SW: Sector = {
  at: "translate(0 1290)",
  white: [
    "M-6 260H190Q190 290 150 325 100 380 65 400L-6 415z", "M-6 430L20 435 35 440 48 428 30 450-6 440z",
    "M217 158L272 148 283 175 226 186z", "M545 235L555 228 580 222 592 210 632 230V240L600 238 550 243z",
    "M490 290L515 273 565 302 632 293 602 347 560 342z", "M598 360L602 353 628 366 622 374 600 366z",
    "M630 402L660 380 677 388 645 420z", "M550 425L562 405 580 415 662 428 655 436 580 422 570 432z",
    "M695 408L712 403 728 410 770 393 780 380 802 385 790 427 755 418 725 427 715 422z", "M905 450L950 460 945 470 908 458z",
    "M308 430L330 402 362 410 377 390 420 402 412 415 425 432 470 418 523 430 525 447 568 455 565 480 518 474 515 482 445 475 430 495 350 462z",
    "M470 545L487 540 485 573 470 573z", "M890 515L912 530 928 560 928 580 937 605 893 598 900 570 902 545z",
    "M970 505L990 505 995 522 1018 528 1030 510 1050 503 1062 506 1076 515 1067 525 1062 535 1087 536V580L1043 580 1030 618 1015 618 1005 600 1005 572 988 568 978 540z",
  ],
  shore: [
    "M-10 450L45 465 195 525 192 540 240 568 232 583 257 598 272 580 370 607 388 585 345 578 350 550 378 516 420 543 408 568 425 570 420 580 452 583 450 593 530 600 532 573 595 556 640 564 Q690 540 705 518L700 505 710 490 740 500 780 478 795 478 797 492 820 505 825 520 888 530 880 540 880 592 890 610 803 596 802 610 788 615 787 635 780 637 757 600 755 570 738 555 715 550 690 580 693 598 670 595 650 608 715 638 722 658 745 670 758 668 770 660 765 645 775 640 790 647 810 643 845 697 875 672 877 650 858 635 865 628 890 643 940 630 955 643 985 615 1000 620 1015 642 1040 655 1038 675 1020 687 1080 720",
  ],
  wide: [
    [15, "M855 110L835 200Q840 250 900 280L1080 350"],
    [11, "M605 1335L710 1250 870 1180 925 1150 970 1105 1070 1020 1085 995"], [9, "M925 1155L870 1215M998 1190L1080 1168"],
    [12, "M-5 122L500 65 600 52 640 40M650 45L840 100"], [10, "M-5 230L440 148 600 130 850 112"], [10, "M700 160L640 160"], [16, "M900 35L870 90 830 105"], [14, "M655-5L640 50"],
  ],
  thin: [
    "M0 258Q130 268 240 250L400 205 600 168 700 162 830 188", "M190 262L185 290 130 345 65 400-5 415",
    "M272 580L262 605 235 625 228 688 275 678 322 688 320 715 292 740 270 725 258 718Q235 725 205 762L175 768 115 798 110 835M285 740L265 765Q265 780 310 810L300 830",
    "M-5 840L15 818 110 838 222 863 270 822 393 868M393 870L482 820 530 837 605 760Q650 730 695 722 710 720 750 752 L845 755 870 780 903 790 875 815 870 845 820 925 800 962 750 1010 690 1042 662 1062 585 1082 525 1130 510 1170 495 1240 478 1335M393 870L345 910 290 938 220 952 180 990 150 1035 127 1098 143 1108 150 1135 190 1175 205 1195 208 1212 148 1270 110 1280 60 1262 0 1240M222 865L225 910 220 952",
    "M335 978L327 1000 485 1035 655 1052M380 1042L575 1090M690 1042L680 1080 683 1110 755 1153 870 1178M755 1155L715 1200 682 1190M705 1190l12-2M510 1158L540 1163 525 1200 500 1196M525 1200L525 1230 518 1270",
    "M190 1173L225 1170M205 1192L220 1188M208 1210L258 1205M215 1208L240 1225M235 1215L270 1250 302 1270 283 1298 255 1295M148 1225L170 1240M85 1245L145 1265M148 1275L175 1305 182 1335M125 1278L105 1335M0 1140L20 1145 15 1160 40 1190 58 1220 30 1240M100 1320L95 1335M60 1320l5 8",
    "M945 1128L978 1140 985 1170 1010 1230 1040 1250 1085 1268M970 1110L1085 1115M1010 1230L980 1250 975 1275 1000 1300 1008 1335M870 1212L862 1240 855 1280 785 1335M870 1212L910 1225 915 1250 980 1272M855 1280L900 1300 960 1288Q975 1295 965 1320M825 1305L870 1330M900 1300L885 1335M850 1185L870 1212M535 1335L600 1290 635 1300M1078 750v18",
    "M800 190L835 190M650 125L705 160", "M660 52L835 98",
  ],
  green: ["M583 1300L605 1288 590 1305z"],
  ink: [
    "M438 90L440 70 500 66 497 97z", "M282 178l15 8 12-8M50 218l10-6 8 5", "M655 125L715 158M645 128L700 160M440 148L430 155",
    "M530 5L620 35M545-5L630 22M655 5L870 75M730-5L880 30M640-5L860 75M780-5L895 30M890 38L1085 95M885 80L1085 142M885 95L1000 130 1020 145 1085 165M900 25L950 12 958 18 910 32",
    "M527 200L540 190 625 175M530 200L540 210 525 235 510 245 502 262 518 273M490 293L497 305 482 320 537 353 518 402 495 410 523 413V430M602 347L598 360M620 293L655 270 690 233 680 222 710 222 725 205 770 215 775 225 785 215 783 200 755 190 752 175M690 233L733 260V290L770 297 800 290 860 300 900 310 950 335 993 375 1035 420 1045 435 1000 425 990 430",
    "M670 350L728 305 750 333 705 362zM745 332L770 312 800 310 845 315 900 340 955 380 960 395 993 375M750 335H798L795 325 840 340 848 355 890 358 945 400 960 395M800 310L798 283 850 300M945 400L955 405 972 430 962 442 918 422 925 412 950 415",
    "M840 365L875 375 865 405 873 408 858 442 830 440z", "M980 460L990 440 1010 448 1000 468zM1015 430L1040 437 1035 460 965 475M1010 448L1035 450M993 430L1000 420 1020 428M965 478L970 485 955 505 925 505 922 515 940 520 955 535 975 525",
    "M350 462L325 488 305 478 290 488 292 495 265 517 250 512 238 525 240 545 255 548 240 552 272 580", "M790 180Q800 205 830 208L840 200 820 190M905 290L920 292 925 300 940 295 955 305M905 290L908 303 925 308", "M640 15Q620 30 630 45L650 60 660 50",
    "M880 535L900 570 895 598",
  ],
};

const SE: Sector = {
  at: "translate(1062 1290)",
  white: [
    "M53 569L98 577 95 586 53 585z",
    "M307 668L508 637 515 670 533 708 495 722 538 760 498 776 447 717 410 728 408 708 358 715 358 732 320 735z",
    "M285 622q8-15 25-10 15 8 12 22-10 15-28 8-12-5-9-20z", "M720 757L738 740 750 750 735 772z",
    "M870 650L945 580 955 580 880 658z", "M1025 575L1045 542 1070 540V622z",
  ],
  shore: [
    "M-6 708L18 722 25 740 18 755 18 765 38 775 95 780 125 690 138 683 158 693 180 715 230 750 285 768 340 757 320 800 335 825 405 860 460 848 470 877 482 877 495 893 545 915 597 915 600 880 583 875 587 822 635 830 657 803 648 795 712 757 737 772 760 745 815 772 835 740 825 720 857 683 855 675 905 635 958 580 1005 560 1030 580 1070 618",
  ],
  green: ["M290 622q10-8 22 2 5 12-5 15-15 0-17-17z", "M95 1142L135 1115 130 1130z", "M445 1120L470 1105 468 1118 420 1135z"],
  wide: [
    [13, "M-5 345L40 370 88 400 95 420 120 650 140 670M100 400L115 560 130 655 155 672"], [12, "M125 690L100 780 25 995 0 1030"], [12, "M150 695L200 800 305 1000 368 1115"],
    [8, "M100 787L200 803"], [10, "M25 995L90 997 150 955Q185 945 185 970L120 1015Q120 1035 155 1040L240 1005 300 995"], [10, "M305 992L450 935 500 895Q515 895 540 915L600 918 720 948Q755 945 750 920"],
    [9, "M-5 1115L70 1108 220 1055 290 1000M315 1020L255 1075 175 1100-5 1172M160 1078L178 1103"],
    [10, "M810 812Q840 780 870 780L910 800 960 785 1035 765 1065 710"], [9, "M905 802L880 798 860 802Q855 815 920 835L875 945 795 990 790 1020 760 1060 765 1078 800 1105 828 1170 828 1220 835 1255"],
    [9, "M820 665L780 710 740 765M950 580L860 665 800 705"], [12, "M1030 202L890 375 850 485"],
  ],
  thin: [
    "M840 492L960 498 985 515 1010 560 1062 612M860 458L1070 480M860 462H920L1065 450M1000 540L1065 525", "M1065 630L1045 640 1025 700 1033 698M1050 730L1035 768",
    "M368 1117Q345 1130 348 1155L280 1172 230 1178 110 1215 75 1240 45 1272 75 1325 85 1335M348 1125Q390 1105 420 1135L470 1110M225 1180L230 1215 220 1225 238 1248 197 1292M215 1270L238 1295 230 1310 242 1315M0 1258L45 1275M75 1240L100 1252M90 1250L65 1295M25 1300L35 1330M85 1320L155 1332",
    "M460 1163L515 1180 590 1175M460 1163V1195L480 1215 530 1232 465 1260 440 1285 425 1335M480 1190L495 1178 510 1190M440 1285L520 1272 585 1300 530 1335M440 1285L390 1332M460 1332l15-6M530 1295L575 1310M535 1300L530 1325 570 1318 610 1305 720 1280 775 1282 835 1255M775 1282L768 1335M775 1275L790 1262M830 1182L872 1170M788 1215L805 1232 815 1260M835 1255L842 1335M850 1262L880 1335M850 1262L890 1318 920 1330 925 1305 980 1268M838 1260V1300",
    "M985 918L998 945 1040 965 1045 985 1030 992 1065 1028", "M510 636L550 628 575 632M395 235L520 290M365 280L495 325",
    "M840 492L850 462M712 565L770 570 955 558M1000 540L1022 575",
  ],
  ink: [
    "M135-5L197 73 270 10M360-5L392 30 450 33 468 12M460 20q12-2 20 8-5 8-18 4zM458 100q10-12 24-6 5 10-5 32-12 12-22 4-5-8 3-30z",
    "M-5 85L125 125 140 135 210 158 232 168 245 168 395 232 632 335 612 362 495 325 360 275 270 245 170 207 130 180-5 132M130 185L122 197-5 158M200 158L163 200M213 160L175 205M388 232L358 275M397 235L367 278M508 290L490 322M518 292L500 325",
    "M645 340L628 368 860 458M645 340L740 377 870 402 1070 420", "M135 293L148 280 160 285 150 307 132 300z", "M270 315L280 303 310 313 303 328 272 322z", "M362 413L377 401 394 410 375 427z", "M22 475L36 465 48 477 35 488z",
    "M85 365L90 360 130 378 115 398 100 402Q75 390 78 370z", "M120 402L190 432 205 448 198 460 213 478 208 495 198 512 220 528 240 512 255 515 262 505 287 513 280 530 288 540 258 555 240 542 205 542 185 568 168 573 150 567 125 570 108 400",
    "M178 670L235 607 348 562 335 543 375 542 365 520 380 515 420 510 470 497 500 507 530 502 600 455 618 465 630 487 692 503 682 555 697 578 655 600 605 608 600 620 570 635M697 578L700 590 708 600 690 605 685 620 640 615 600 622 575 637 545 625 510 637M145 672L178 668 175 680 158 690",
    "M690 640H742L758 678 750 710 765 720 735 760M690 640L705 690 685 695 680 710 655 725 675 738 650 752 615 768 572 785 538 760",
    "M712 563L750 530 775 535 787 515 740 483 755 460 738 452 750 440 782 465 768 488 870 530 880 520 950 517 958 545 925 560M700 578L745 570 810 578 850 568 890 562M780 578V590L810 600 830 590 825 573M850 570L870 590 893 572M935 560L958 580",
    "M1030 198L1065 205M958 305L965 298 1008 315 1000 328 960 312M870 402H850M900 475V472L948 478 950 485",
  ],
};

const sectors = [NW, NE, SW, SE];

const MapCanvas = () => (
  <svg viewBox="0 9 2124 2613" preserveAspectRatio="none" className="block h-full w-full" fill="none" strokeLinejoin="round">
    <path d="M-9 0H2140V2640H-9z" fill={GREEN} />
    <path d="M-10 1740L45 1755 195 1815 192 1830 240 1858 232 1873 257 1888 272 1870 370 1897 388 1875 345 1868 350 1840 378 1806 420 1833 408 1858 425 1860 420 1870 452 1873 450 1883 530 1890 532 1863 595 1846 640 1854Q690 1830 705 1808L700 1795 710 1780 740 1790 780 1768 795 1768 797 1782 820 1795 825 1810 888 1820 880 1830 880 1882 890 1900 803 1886 802 1900 788 1905 787 1925 780 1927 757 1890 755 1860 738 1845 715 1840 690 1870 693 1888 670 1885 650 1898 715 1928 722 1948 745 1960 758 1958 770 1950 765 1935 775 1930 790 1937 810 1933 845 1987 875 1962 877 1940 858 1925 865 1918 890 1933 940 1920 955 1933 985 1905 1000 1910 1015 1932 1040 1945 1038 1965 1020 1977 1080 2012 1087 2030 1080 2045 1080 2055 1100 2065 1157 2070 1187 1980 1200 1973 1220 1983 1242 2005 1292 2040 1347 2058 1402 2047 1382 2090 1397 2115 1467 2150 1522 2138 1532 2167 1544 2167 1557 2183 1607 2205 1659 2205 1662 2170 1645 2165 1649 2112 1697 2120 1719 2093 1710 2085 1774 2047 1799 2062 1822 2035 1877 2062 1897 2030 1887 2010 1919 1973 1917 1965 1967 1925 2020 1870 2067 1850 2092 1870 2140 1915V2640H-10z" fill="#fff" />
    {sectors.map((s) => (
      <g key={s.at} transform={s.at} stroke={INK} strokeWidth="3.1">
        {s.white?.map((d) => <path key={d} d={d} fill="#fff" />)}
        {s.shore?.map((d) => <path key={d} d={d} />)}
        {s.green?.map((d) => <path key={d} d={d} fill={GREEN} />)}
      </g>
    ))}
    {sectors.map((s) => (
      <g key={s.at} transform={s.at} stroke={INK}>
        {s.wide?.map(([w, d]) => <path key={d} d={d} strokeWidth={w + 1.5} />)}
      </g>
    ))}
    {sectors.map((s) => (
      <g key={s.at} transform={s.at} stroke={GREEN}>
        {s.wide?.map(([w, d]) => <path key={d} d={d} strokeWidth={w - 4.5} />)}
      </g>
    ))}
    {sectors.map((s) => (
      <g key={s.at} transform={s.at} stroke={INK}>
        {s.ink?.map((d) => <path key={d} d={d} strokeWidth="3.2" />)}
        {s.thin?.map((d) => <path key={d} d={d} strokeWidth="4.8" />)}
      </g>
    ))}
    <path transform="translate(1062 0)" d="M110 1020L140 1018 170 1020 182 1030 160 1052 146 1072 117 1060 128 1043z" fill="#c4523a" stroke="#f00" strokeWidth="13" />
  </svg>
);

/* ---------- docks ---------- */

const DockTitle = ({ children }: Kids) => (
  <div className="flex h-[22px] shrink-0 items-center pb-[3px] pl-1 pr-[2px]">
    <span className="grow">{children}</span>
    <Svg s="h-3 w-3"><rect x="1" y="1" width="22" height="22" rx="4" stroke="#666" strokeWidth="2" /><path d="M9 8V5h10v10h-4M5 10h9v9H5z" stroke="#666" strokeWidth="2" /></Svg>
    <Svg s="ml-0.5 h-3 w-3"><rect x="1" y="1" width="22" height="22" rx="4" stroke="#666" strokeWidth="2" /><path d="M6 6l12 12M18 6L6 18" stroke="#555" strokeWidth="4.500" /></Svg>
  </div>
);
const S = "h-4 w-4";
const L = ({ children, w = "w-[25px]" }: Kids & { w?: string }) => <div className={`${w} flex shrink-0 items-center justify-center`}>{children}</div>;
const Arrow = ({ dir }: { dir: "up" | "down" | "left" | "right" }) => (
  <svg viewBox="0 0 8 8" className="h-2 w-2"><path d={{ up: "M4 2l4 4H0z", down: "M4 6l4-4H0z", left: "M1.500 4l4.500-4v8z", right: "M6.500 4L2 0v8z" }[dir]} fill="#555" /></svg>
);

const browserRows: [string, boolean, React.ReactNode][] = [
  ["Favorites", false, <path d="M12 1l3.200 7.500 8 .7-6 5.300 1.800 8L12 18.300 5 22.500l1.800-8-6-5.300 8-.7z" fill="#fbe44c" stroke="#c4a000" />],
  ["Spatial Bookmarks", true, <g><Roll /><path d="M14 1h5v11l-2.500-2.500L14 12z" fill="#4a80bd" /></g>],
  ["Home", true, <g stroke="#777" strokeWidth="1.500"><path d="M2 22V3h8l2 3h10v16z" fill="#f3f3f3" /><path d="M7 14l5-5 5 5M9 13v6h6v-6" stroke="#444" /></g>],
  ["/", true, <path d="M2 21V3h8l2 3h10v15z" fill="#efefef" stroke="#888" strokeWidth="1.500" />],
  ["GeoPackage", true, <Cube />],
  ["SpatiaLite", false, <Feather />],
  ["PostGIS", true, <path d="M3 3c4-3 15-3 19 0 3 4 0 11-3 13l-2-1v6c-2 3-4 2-5 0v-7l-2 1v5c-3 0-4-3-4-6C2 12 1 6 3 3zM9 4v10M16 4c3 3 2 7 0 10" fill="#6c97c9" stroke="#2f5580" strokeWidth="1.300" />],
  ["SAP HANA", false, <g><rect x="4" y="4" width="16" height="16" fill="#6c97c9" /><rect x="1.500" y="1.500" width="21" height="21" stroke="#2f4a6b" strokeWidth="2" strokeDasharray="2 2" /></g>],
  ["MSSQL", false, <path d="M1 2c8 0 18 3 22 9l-1 4-9 1-11 6c3-6 3-13-1-20zM8 3c3 6 3 10 2 15M15 5c2 5 2 8 1 11" fill="#6c97c9" stroke="#34587f" strokeWidth="1.200" />],
  ["WMS/WMTS", false, <Earth />],
  ["Vector Tiles", false, <g stroke="#555" strokeWidth="2"><rect x="2" y="2" width="20" height="20" fill="#e5e5e5" /><path d="M2 9h20M2 16h20M9 2v20M16 2v20" /></g>],
];

const LeftDocks = () => (
  <div className="flex w-[278px] shrink-0 flex-col">
    <DockTitle>Browser</DockTitle>
    <div className="mb-[4px] flex h-6 shrink-0 pl-[3px]">
      <L><Svg s={S}><rect x="2" y="2" width="17" height="18" stroke="#777" strokeWidth="1.500" /><rect x="13" y="14" width="10" height="10" rx="3" fill="#4b8a55" /><path d="M18 16v6M15 19h6" stroke="#fff" strokeWidth="1.500" /></Svg></L>
      <L><Svg s={S}><Refresh /></Svg></L>
      <L><Svg s={S}><Funnel /></Svg></L>
      <L><Svg s={S}><Tree dir="up" /></Svg></L>
      <L><Svg s={S}><Info /></Svg></L>
    </div>
    <div className="flex h-[201px] shrink-0 border border-[#b4b4b4] bg-white">
      <div className="grow overflow-hidden">
        {browserRows.map(([name, kids, icon]) => (
          <div key={name} className="flex h-[19px] items-center">
            <div className="flex w-[18px] justify-center">{kids && <Arrow dir="right" />}</div>
            <Svg s="h-4 w-4">{icon}</Svg>
            <span className="ml-[7px]">{name}</span>
          </div>
        ))}
      </div>
      <div className="flex w-[15px] shrink-0 flex-col border-l border-[#b4b4b4] bg-[#e3e3e3]">
        <div className="flex h-[14px] items-center justify-center border-b border-[#b4b4b4] bg-[#f7f7f7]"><Arrow dir="up" /></div>
        <div className="h-[107px] border-b border-[#b4b4b4] bg-gradient-to-r from-white to-[#f0f0f0]" />
        <div className="mt-auto flex h-[14px] items-center justify-center border-t border-[#b4b4b4] bg-[#f7f7f7]"><Arrow dir="down" /></div>
      </div>
    </div>
    <div className="flex h-[6px] shrink-0 items-center justify-center"><div className="h-px w-4 border-t border-dotted border-[#aaa]" /></div>
    <DockTitle>Layers</DockTitle>
    <div className="mb-[3px] flex h-[25px] shrink-0 pl-[3px]">
      <L><Svg s={S}><path d="M10 12L22 2" stroke="#b0813a" strokeWidth="4" /><path d="M2 6l9 2 5 7-6 7c-5-2-8-9-8-16z" fill="#f6d24a" /><path d="M2 6l5 1-1 10c-3-3-4-7-4-11z" fill="#e2543c" /><path d="M11 8l6 6-4 4-5-7z" fill="#5b8cc4" /></Svg></L>
      <L><Svg s={S}><path d="M2 9v13h13M6 6v13h13V6zM10 2v13M13 4V2h8v15" stroke="#777" strokeWidth="1.600" /><rect x="14" y="14" width="10" height="10" rx="3" fill="#4b8a55" /><path d="M19 16v6M16 19h6" stroke="#fff" strokeWidth="1.500" /></Svg></L>
      <L><Svg s={S}><path d="M1 12C6 4 17 4 22 12 17 18 6 18 1 12z" fill="#fff" stroke="#777" strokeWidth="1.600" /><circle cx="12" cy="11" r="4.500" fill="#5b8cc4" stroke="#333" /><path d="M17 20h7l-3.500 4z" fill="#555" /></Svg></L>
      <L><Svg s={S}><Funnel /><path d="M17 20h7l-3.500 4z" fill="#555" /></Svg></L>
      <L><Svg s={S}><text x="0" y="14" fontSize="26" fontWeight="700" fill="#7a4a8a" fontFamily="Liberation Serif, serif">ε</text><path d="M12 23v-9h11v9h-3v-6h-4v6z" fill="#ccc" stroke="#888" /></Svg></L>
      <Tri w="w-[12px]" />
      <L><Svg s={S}><Tree dir="down" /></Svg></L>
      <L><Svg s={S}><Tree dir="up" /></Svg></L>
      <L><Svg s={S}><rect x="2" y="2" width="17" height="18" stroke="#777" strokeWidth="1.500" /><rect x="13" y="15" width="11" height="8" rx="3" fill="#dd3b3f" /><path d="M15.500 19h6" stroke="#fff" strokeWidth="2" /></Svg></L>
    </div>
    <div className="flex min-h-0 grow flex-col border border-[#b4b4b4] bg-white">
      <div className="flex h-[19px] shrink-0 items-center overflow-hidden bg-[#308cc6] pl-[23px]">
        <Svg s="h-[13px] w-[13px]"><path d="M0 0h24v24H0z" fill="#fff" stroke="#999" /><path d="M6 12l4 6 8-14" stroke="#111" strokeWidth="3" /></Svg>
        <div className="ml-[7px] h-4 w-4 shrink-0 border border-[#44765a] bg-[#5f9785]" />
        <span className="ml-[6px] whitespace-nowrap border-b border-white text-[15px] font-bold leading-[16px] tracking-[0.15px] text-white">Firenze_land-use_CLC_WGS_84_SELECTED</span>
      </div>
      <div className="grow" />
      <div className="flex h-[14px] border-t border-[#b4b4b4] bg-[#e3e3e3]">
        <div className="flex w-[14px] items-center justify-center border-r border-[#b4b4b4] bg-[#f7f7f7]"><Arrow dir="left" /></div>
        <div className="w-[184px] border-r border-[#b4b4b4] bg-gradient-to-b from-white to-[#f0f0f0]" />
        <div className="ml-auto flex w-[14px] items-center justify-center border-l border-[#b4b4b4] bg-[#f7f7f7]"><Arrow dir="right" /></div>
      </div>
    </div>
  </div>
);

const fields: [string, string][] = [
  ["fid", "62405"], ["pk_uid", "276383"], ["codreg", "09"], ["siglareg", "RT"], ["regione", "TOSCANA"], ["codprov", "048"], ["siglaprov", "FI"], ["codistat", "048017"], ["nome", "FIRENZE"],
  ["ucs07", "133"], ["c1_07", "1"], ["c2_07", "13"], ["c3_07", "133"],
  ["ucs10", "133"], ["c1_10", "1"], ["c2_10", "13"], ["c3_10", "133"],
  ["ucs13", "133"], ["c1_13", "1"], ["c2_13", "13"], ["c3_13", "133"],
  ["ucs16", "133"], ["c1_16", "1"], ["c2_16", "13"], ["c3_16", "133"],
  ["ucs19", "133"], ["c1_19", "1"], ["c2_19", "13"], ["c3_19", "133"],
  ["area", "11429.76106"],
];

const SSep = ({ w = "w-2" }: { w?: string }) => <div className={`${w} flex shrink-0 items-center justify-center`}><div className="h-3 w-px bg-[#cfcfcf]" /></div>;

const Identify = () => (
  <div className="flex min-w-0 grow flex-col">
    <DockTitle>Identify Results</DockTitle>
    <div className="mb-[4px] flex h-6 shrink-0 pl-[3px]">
      <L><Svg s={S}><rect x="1.500" y="1.500" width="21" height="21" rx="2" fill="#cfe0f2" stroke="#8aa9cc" strokeWidth="1.500" /><path d="M4 8h6M4 16h6" stroke="#555" strokeWidth="1.500" /><rect x="12" y="5" width="8" height="5" fill="#fff" stroke="#888" /><rect x="12" y="13" width="8" height="5" fill="#fff" stroke="#888" /></Svg></L>
      <SSep w="w-[7px]" />
      <L><Svg s={S}><Tree dir="down" /></Svg></L>
      <L><Svg s={S}><Tree dir="up" /></Svg></L>
      <L><Svg s={S}><Tree dir="down" /><path d="M8 1l2.200 4.500 5 .5-3.700 3.500 1 5L8 12l-4.500 2.500 1-5L1 6l5-.5z" fill="#fbd31a" stroke="#c98a00" /></Svg></L>
      <SSep w="w-[7px]" />
      <L><Svg s={S}><Yellow2 /><NoEntry /></Svg></L>
      <SSep w="w-[6px]" />
      <L><Svg s={S} o="grayscale opacity-50"><path d="M10 2h8l4 4v11H10z" fill="#eee" stroke="#555" strokeWidth="1.500" /><path d="M3 7h8l4 4v11H3z" fill="#fff" stroke="#555" strokeWidth="1.500" /><path d="M5 13h7M5 16h8M5 19h8" stroke="#555" /></Svg></L>
      <L><Svg s={S} o="opacity-40"><path d="M6 8V2h12v6M2 8h20v10H2zM6 15h12v7H6z" fill="#ccc" stroke="#777" strokeWidth="1.500" /></Svg></L>
      <SSep w="w-[7px]" />
      <L><Svg s={S}><rect x="1.500" y="1.500" width="21" height="21" stroke="#777" strokeWidth="2" strokeDasharray="3 2.500" /><g transform="scale(.7)"><Info /></g><Cursor x={12} y={10} /></Svg></L>
      <Tri w="w-[12px]" />
      <L><Svg s={S}><Wrench /></Svg></L>
      <SSep w="w-[7px]" />
      <L><Svg s={S}><Book /></Svg></L>
    </div>
    <div className="flex min-h-0 grow flex-col border border-[#b4b4b4] bg-white">
      <div className="flex h-[21px] shrink-0 items-center border-b border-[#b4b4b4] bg-gradient-to-b from-white to-[#e8e8e8]">
        <div className="flex h-full w-[323px] items-center border-r border-[#c4c4c4] pl-[2px]">Feature</div>
        <div className="pl-[2px]">Value</div>
      </div>
      <div className="flex h-[17px] items-center pl-[2px]"><Arrow dir="down" /><span className="ml-[5px] text-[15px] font-bold tracking-[0.15px]">Firenze_land-use_CLC_WGS_84_SELECTED</span></div>
      <div className="flex h-[17px] items-center bg-[#308cc6] text-white">
        <div className="flex w-[326px] items-center pl-[14px]"><Arrow dir="down" /><span className="ml-[5px]">nome</span></div>FIRENZE
      </div>
      <div className="flex h-[17px] items-center pl-[26px]"><Arrow dir="right" /><span className="ml-[5px]">(Derived)</span></div>
      <div className="flex h-[17px] items-center bg-[#f7f7f7] pl-[26px]"><Arrow dir="right" /><span className="ml-[5px]">(Actions)</span></div>
      {fields.map(([k, v], i) => (
        <div key={k + i} className="flex h-[17px] items-center odd:bg-[#f7f7f7] even:bg-white">
          <div className="w-[326px] pl-[39px]">{k}</div>{v}
        </div>
      ))}
    </div>
    <div className="flex h-[36px] shrink-0 items-center pl-1 pr-1">
      <span className="w-[47px]">Mode</span>
      <div className="flex h-[25px] grow items-center justify-between rounded-[3px] border border-[#a8a8a8] bg-gradient-to-b from-white to-[#ececec] pl-1 pr-[6px]"><span>Current Layer</span><Arrow dir="down" /></div>
    </div>
    <div className="flex h-[32px] shrink-0 items-start pl-1 text-[#bcbcbc]">
      <span className="w-[41px] pt-[6px]">View</span>
      <div className="flex h-[25px] w-[86px] items-center justify-between rounded-[3px] border border-[#c4c4c4] bg-[#f3f3f3] pl-1 pr-[6px]"><span>Tree</span><div className="opacity-35"><Arrow dir="down" /></div></div>
    </div>
  </div>
);

const Spin = () => (
  <div className="ml-auto flex h-full w-[14px] flex-col items-center justify-center gap-[2px] border-l border-[#b4b4b4]"><Arrow dir="up" /><Arrow dir="down" /></div>
);

const StatusBar = () => (
  <div className="flex h-[31px] shrink-0 items-center text-[12px] tracking-[-0.1px]">
    <div className="ml-1 flex h-[25px] w-[268px] items-center rounded-[3px] border border-[#a8a8a8] bg-white pl-2 text-[14.5px] tracking-[0.1px] text-[#868686]">
      <Svg s="h-[13px] w-[13px]"><circle cx="10" cy="10" r="7.500" stroke="#888" strokeWidth="2" /><path d="M15.500 15.500l7 7" stroke="#888" strokeWidth="2.500" /></Svg>
      <span className="ml-[7px]">Type to locate (Ctrl+K)</span>
    </div>
    <span className="ml-[750px] w-[64px]">Coordinate</span>
    <div className="flex h-6 w-[122px] items-center justify-center rounded-[3px] border border-[#a8a8a8] bg-white">11.25111,43.80451</div>
    <div className="ml-[5px] w-[28px]"><Svg s={S}><path d="M3 4l9 3 8 8-5 8-9-6z" fill="#eee" stroke="#444" strokeWidth="1.600" /><path d="M4 4l10 9M9 3l8 8M15 5l2 6M3 10l8 8" stroke="#222" strokeWidth="2.600" /><path d="M17 7l5-5" stroke="#555" strokeWidth="1.500" strokeDasharray="2 1" /><circle cx="14" cy="17" r="3" stroke="#333" strokeWidth="1.600" /></Svg></div>
    <span className="w-[32px]">Scale</span>
    <div className="flex h-[25px] w-[97px] items-center rounded-[3px] border border-[#a8a8a8] bg-white pl-1">1:15035<div className="ml-auto flex h-full w-5 items-center justify-center border-l border-[#b4b4b4] bg-[#f3f3f3]"><Arrow dir="down" /></div></div>
    <div className="ml-[10px] w-[22px]"><Svg s={S}><path d="M6 12V7a6 6 0 0 1 12 0v5" stroke="#777" strokeWidth="2.200" /><rect x="3" y="10.500" width="18" height="12.500" rx="2" fill="#555" /></Svg></div>
    <span className="w-[56px]">Magnifier</span>
    <div className="flex h-6 w-[98px] items-center rounded-[3px] border border-[#a8a8a8] bg-white pl-1">100%<Spin /></div>
    <span className="ml-[9px] w-[57px]">Rotation</span>
    <div className="flex h-6 w-[94px] items-center rounded-[3px] border border-[#a8a8a8] bg-white pl-1">0.0 °<Spin /></div>
    <Svg s="ml-[7px] h-[14px] w-[14px]"><path d="M1 1h22v22H1z" fill="#fff" stroke="#999" strokeWidth="1.700" /><path d="M6 12l4 6 8-14" stroke="#111" strokeWidth="3" /></Svg>
    <span className="ml-[4px] w-[56px]">Render</span>
    <Svg s="h-[15px] w-[15px]"><circle cx="12" cy="12" r="9.500" fill="#ccc" stroke="#555" strokeWidth="1.500" /><path d="M0 12h24M12 0v24M4 7.500h16M4 16.500h16" stroke="#555" strokeWidth="1.200" /><ellipse cx="12" cy="12" rx="5" ry="9.500" stroke="#555" strokeWidth="1.200" /></Svg>
    <span className="ml-[2px] w-[83px] whitespace-nowrap tracking-[-0.4px]">EPSG:4326</span>
    <Svg s="h-4 w-4"><path d="M12 3c6 0 11 3.500 11 8.500 0 3-1.500 5-3.500 6.500l1.500 5-5.500-3.500c-8 1.500-14.500-2.500-14.500-8S6 3 12 3z" fill="#555" /><path d="M6 11.500h3M10.500 11.500h3M15 11.500h3" stroke="#fff" strokeWidth="3" /></Svg>
  </div>
);

const menus: [string, string, string, string][] = [
  ["Pro", "j", "ect", "w-[62px]"], ["", "E", "dit", "w-[42px]"], ["", "V", "iew", "w-[48px]"], ["", "L", "ayer", "w-[51px]"], ["", "S", "ettings", "w-[71px]"], ["", "P", "lugins", "w-[64px]"],
  ["Vect", "o", "r", "w-[59px]"], ["", "R", "aster", "w-[58px]"], ["", "D", "atabase", "w-[77px]"], ["", "W", "eb", "w-[46px]"], ["", "M", "esh", "w-[51px]"], ["Pro", "c", "essing", "w-[88px]"], ["", "H", "elp", "w-[50px]"],
];

export default function App() {
  return (
    <div className="flex h-[1076px] w-[1921px] flex-col overflow-hidden border-l border-[#0b1626] bg-[#efefef] font-['Noto_Sans',sans-serif] text-[14.5px] leading-none text-black">
      <div className="relative flex h-[33px] shrink-0 items-center justify-center border-b border-[#1c1b1b] bg-[#323031] pb-[3px] text-[15px] font-bold tracking-[-0.22px] text-[#f2f2f2]">
        *Untitled Project — QGIS
        <div className="absolute right-2 top-[4px] flex items-center">
          <div className="mt-1 h-px w-2 bg-white" />
          <Svg s="ml-[25px] h-[9px] w-[9px]"><path d="M8 1h15v15" stroke="#aaa" strokeWidth="2.500" /><path d="M1.500 8h14v14h-14z" stroke="#fff" strokeWidth="3" /></Svg>
          <Svg s="ml-5 h-5 w-5"><circle cx="12" cy="12" r="11.500" fill="#e95420" /><path d="M7.500 7.500l9 9M16.500 7.500l-9 9" stroke="#fff" strokeWidth="1.900" /></Svg>
        </div>
      </div>
      <div className="flex h-[22px] shrink-0 items-center border-b border-[#d3d3d3] pl-[10px]">
        {menus.map(([a, u, b, w]) => (
          <span key={a + u + b} className={`${w} shrink-0 whitespace-nowrap`}>{a}<span className="underline underline-offset-2">{u}</span>{b}</span>
        ))}
      </div>
      <ToolbarOne />
      <ToolbarTwo />
      <ToolbarThree />
      <div className="flex min-h-0 grow pt-[1px]">
        <LeftDocks />
        <div className="flex w-[6px] shrink-0 items-center justify-center"><div className="h-4 w-px border-l border-dotted border-[#aaa]" /></div>
        <div className="w-[710px] shrink-0 border border-[#b4b4b4]"><MapCanvas /></div>
        <div className="flex w-[6px] shrink-0 items-center justify-center"><div className="h-4 w-px border-l border-dotted border-[#aaa]" /></div>
        <Identify />
      </div>
      <StatusBar />
    </div>
  );
}
